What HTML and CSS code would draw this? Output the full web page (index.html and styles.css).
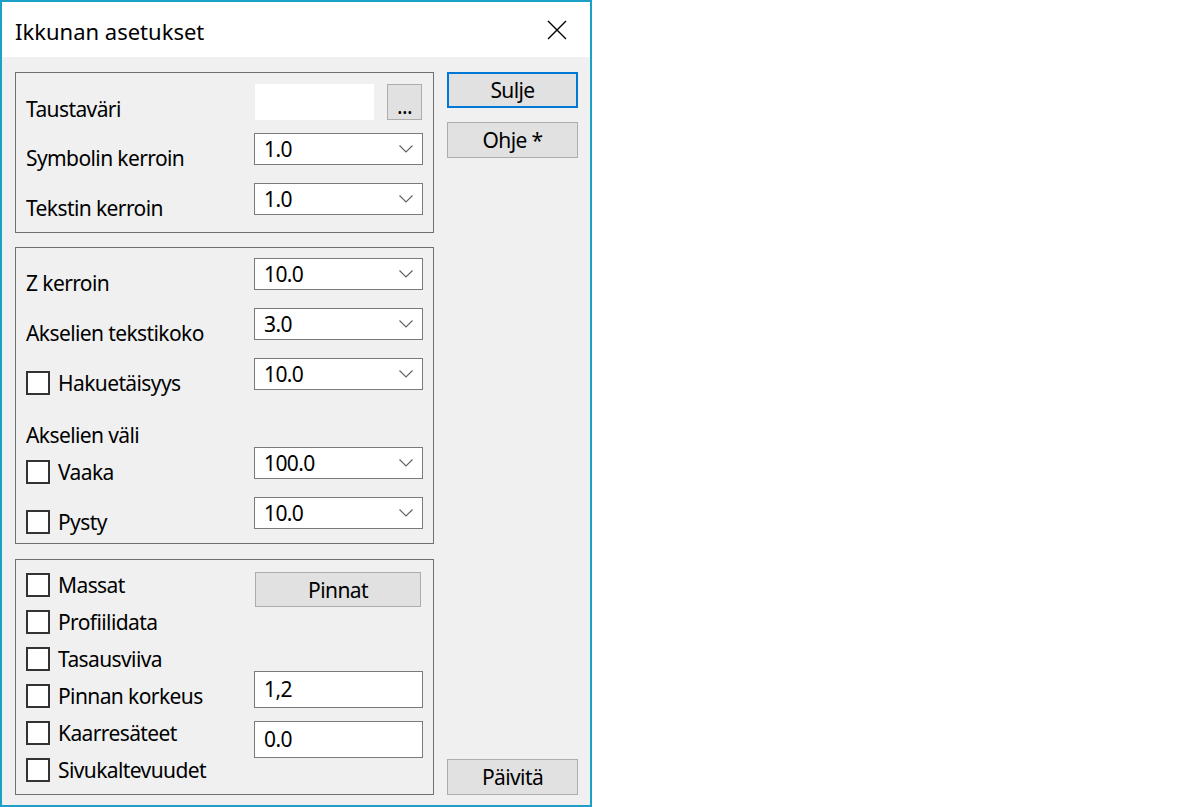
FILE: index.html
```html
<!DOCTYPE html>
<html>
<head>
<meta charset="utf-8">
<title>Ikkunan asetukset</title>
<link rel="stylesheet" href="styles.css">
</head>
<body>
<div class="window">

	<div class="titlebar">
		<span class="title">Ikkunan asetukset</span>
		<button class="close" title="Sulje">
			<svg width="20" height="20" viewBox="0 0 20 20"><path d="M1 1L19 19M19 1L1 19" stroke="#000" stroke-width="1.4" fill="none"/></svg>
		</button>
	</div>

	<div class="content">
		<div class="groups">

			<div class="group g1">
				<div class="row row-tall">
					<span class="label">Taustaväri</span>
					<div class="picker">
						<div class="swatch"></div>
						<button class="btn btn-dots">...</button>
					</div>
				</div>
				<div class="row">
					<span class="label">Symbolin kerroin</span>
					<div class="combo"><span>1.0</span><svg class="chev" width="14" height="8" viewBox="0 0 14 8"><polyline points="0.5,0.5 7,7 13.5,0.5"/></svg></div>
				</div>
				<div class="row">
					<span class="label">Tekstin kerroin</span>
					<div class="combo"><span>1.0</span><svg class="chev" width="14" height="8" viewBox="0 0 14 8"><polyline points="0.5,0.5 7,7 13.5,0.5"/></svg></div>
				</div>
			</div>

			<div class="group g2">
				<div class="row">
					<span class="label">Z kerroin</span>
					<div class="combo"><span>10.0</span><svg class="chev" width="14" height="8" viewBox="0 0 14 8"><polyline points="0.5,0.5 7,7 13.5,0.5"/></svg></div>
				</div>
				<div class="row">
					<span class="label">Akselien tekstikoko</span>
					<div class="combo"><span>3.0</span><svg class="chev" width="14" height="8" viewBox="0 0 14 8"><polyline points="0.5,0.5 7,7 13.5,0.5"/></svg></div>
				</div>
				<div class="row">
					<label class="label"><span class="check"></span>Hakuetäisyys</label>
					<div class="combo"><span>10.0</span><svg class="chev" width="14" height="8" viewBox="0 0 14 8"><polyline points="0.5,0.5 7,7 13.5,0.5"/></svg></div>
				</div>
				<div class="caption">Akselien väli</div>
				<div class="row">
					<label class="label"><span class="check"></span>Vaaka</label>
					<div class="combo"><span>100.0</span><svg class="chev" width="14" height="8" viewBox="0 0 14 8"><polyline points="0.5,0.5 7,7 13.5,0.5"/></svg></div>
				</div>
				<div class="row">
					<label class="label"><span class="check"></span>Pysty</label>
					<div class="combo"><span>10.0</span><svg class="chev" width="14" height="8" viewBox="0 0 14 8"><polyline points="0.5,0.5 7,7 13.5,0.5"/></svg></div>
				</div>
			</div>

			<div class="group g3">
				<div class="checks">
					<label class="label"><span class="check"></span>Massat</label>
					<label class="label"><span class="check"></span>Profiilidata</label>
					<label class="label"><span class="check"></span>Tasausviiva</label>
					<label class="label"><span class="check"></span>Pinnan korkeus</label>
					<label class="label"><span class="check"></span>Kaarresäteet</label>
					<label class="label"><span class="check"></span>Sivukaltevuudet</label>
				</div>
				<div class="side">
					<button class="btn btn-pins">Pinnat</button>
					<div class="field field-first">1,2</div>
					<div class="field">0.0</div>
				</div>
			</div>

		</div>

		<div class="actions">
			<button class="btn btn-default">Sulje</button>
			<button class="btn btn-help">Ohje *</button>
			<button class="btn btn-update">Päivitä</button>
		</div>
	</div>

</div>
</body>
</html>
```

FILE: styles.css
```css
html, body {
  margin: 0;
  padding: 0;
  background: #fff;
  font-family: "Segoe UI", "Noto Sans", sans-serif;
  font-size: 21px;
  letter-spacing: -0.6px;
  color: #000;
}

.window {
  width: 592px;
  height: 807px;
  box-sizing: border-box;
  border: 2px solid #1ba1c6;
  display: flex;
  flex-direction: column;
}

.titlebar {
  height: 55px;
  flex: none;
  background: #fff;
  display: flex;
  align-items: center;
  justify-content: space-between;
  padding: 0 23px 0 13px;
}

.title {
  font-size: 22px;
  letter-spacing: 0;
  margin-top: 2px;
}

.close {
  width: 20px;
  height: 20px;
  padding: 0;
  border: 0;
  background: none;
  display: block;
}

.close svg {
  display: block;
}

.content {
  flex: 1;
  background: #f0f0f0;
  display: flex;
  gap: 13px;
  padding: 15px 12px 10px 13px;
}

.groups {
  width: 419px;
  display: flex;
  flex-direction: column;
}

.group {
  border: 1px solid #707070;
  padding: 0 10px;
}

.g1 {
  padding-top: 11px;
  padding-bottom: 17px;
}

.g2 {
  margin-top: 14px;
  padding-top: 10px;
  padding-bottom: 14px;
}

.g3 {
  margin-top: 15px;
  padding-bottom: 12px;
  display: grid;
  grid-template-columns: 228px 169px;
}

.row {
  display: grid;
  grid-template-columns: 228px 169px;
  height: 32px;
  margin-top: 18px;
}

.row:first-child {
  margin-top: 0;
}

.row-tall {
  height: 36px;
}

.row-tall + .row {
  margin-top: 13px;
}

.row-tall .label {
  margin-top: 13px;
}

.label {
  margin-top: 13px;
  height: 24px;
  line-height: 24px;
  display: flex;
  align-items: center;
  gap: 8px;
  white-space: nowrap;
}

.check {
  width: 24px;
  height: 24px;
  box-sizing: border-box;
  border: 2px solid #333;
  background: #fff;
  flex: none;
}

.caption {
  margin-top: 33px;
  height: 24px;
  line-height: 24px;
}

.caption + .row {
  margin-top: 0;
}

.combo {
  box-sizing: border-box;
  height: 32px;
  border: 1px solid #7a7a7a;
  background: #fff;
  display: flex;
  align-items: center;
  justify-content: space-between;
  padding: 0 9px;
}

.chev {
  display: block;
  fill: none;
  stroke: #606060;
  stroke-width: 1.1;
}

.picker {
  display: flex;
  gap: 13px;
  padding-left: 1px;
}

.swatch {
  width: 119px;
  height: 36px;
  background: #fff;
}

.btn {
  box-sizing: border-box;
  height: 36px;
  width: 131px;
  padding: 0;
  border: 1px solid #adadad;
  background: #e1e1e1;
  font: inherit;
  letter-spacing: inherit;
  color: #000;
}

.btn-dots {
  width: 35px;
  line-height: 1;
  padding-top: 8px;
}

.actions {
  width: 131px;
  display: flex;
  flex-direction: column;
}

.btn-default {
  border: 2px solid #0078d7;
}

.btn-help {
  margin-top: 14px;
}

.btn-update {
  margin-top: auto;
}

.checks {
  display: flex;
  flex-direction: column;
  gap: 13px;
  padding-top: 13px;
}

.checks .label {
  margin-top: 0;
}

.side {
  display: flex;
  flex-direction: column;
  padding-top: 12px;
}

.btn-pins {
  width: 166px;
  height: 35px;
  margin-left: 1px;
}

.field {
  box-sizing: border-box;
  height: 37px;
  line-height: 35px;
  border: 1px solid #7a7a7a;
  background: #fff;
  padding-left: 9px;
  margin-top: 13px;
}

.field-first {
  margin-top: 64px;
}
```
